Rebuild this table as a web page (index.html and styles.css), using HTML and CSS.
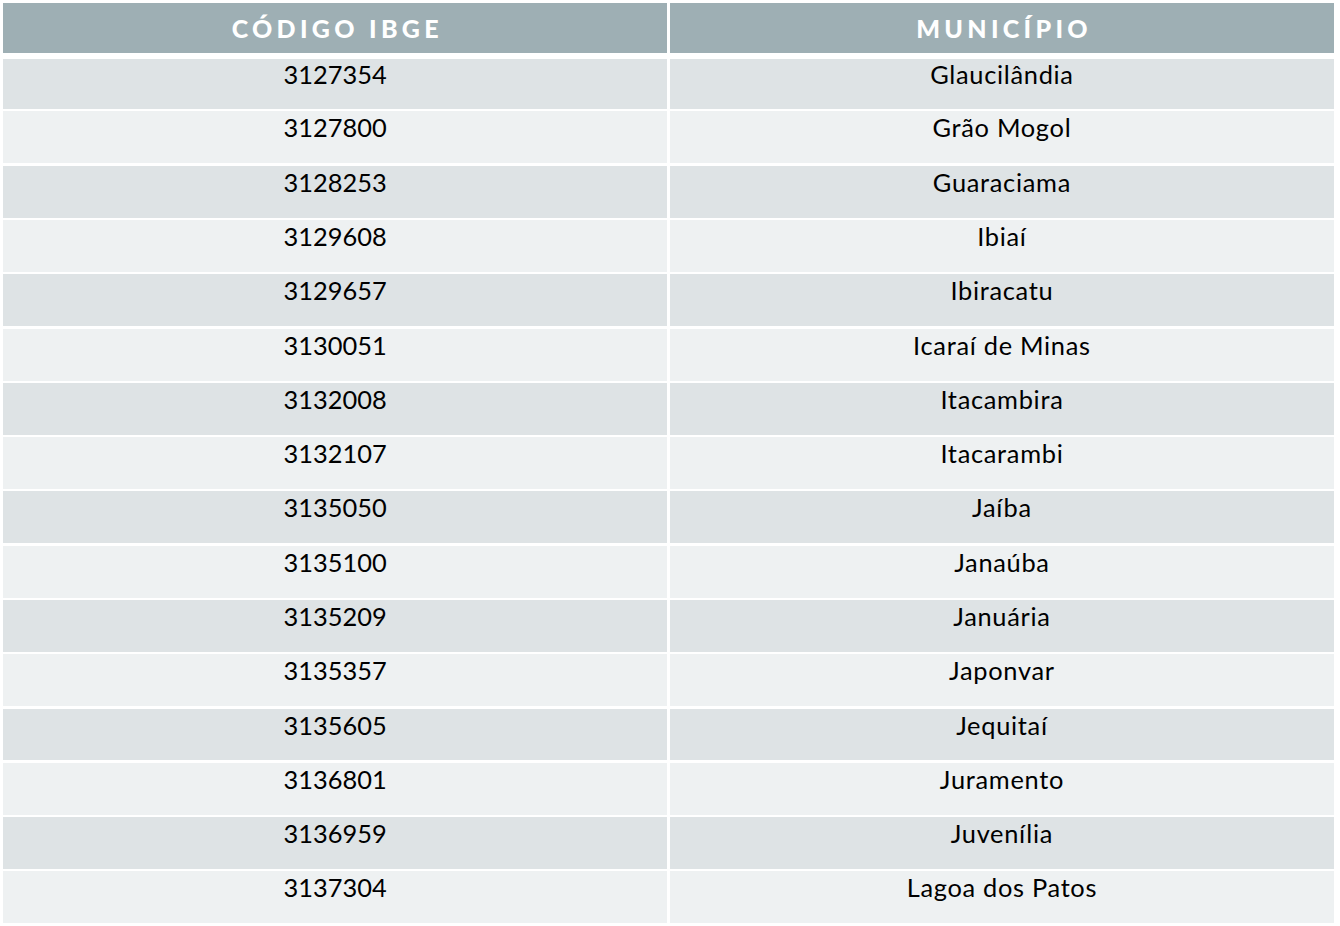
FILE: index.html
```html
<!DOCTYPE html>
<html lang="pt-BR">
<head>
<meta charset="utf-8">
<title>Municípios</title>
<link rel="stylesheet" href="styles.css">
</head>
<body>
<div class="table">
  <div class="head">
    <div class="hcell"><span class="htext">CÓDIGO IBGE</span></div>
    <div class="hcell"><span class="htext">MUNICÍPIO</span></div>
  </div>
  <div class="rows">
    <div class="row odd first"><div class="cell">3127354</div><div class="cell name">Glaucilândia</div></div>
    <div class="row even"><div class="cell">3127800</div><div class="cell name">Grão Mogol</div></div>
    <div class="row odd"><div class="cell">3128253</div><div class="cell name">Guaraciama</div></div>
    <div class="row even"><div class="cell">3129608</div><div class="cell name">Ibiaí</div></div>
    <div class="row odd"><div class="cell">3129657</div><div class="cell name">Ibiracatu</div></div>
    <div class="row even"><div class="cell">3130051</div><div class="cell name">Icaraí de Minas</div></div>
    <div class="row odd"><div class="cell">3132008</div><div class="cell name">Itacambira</div></div>
    <div class="row even"><div class="cell">3132107</div><div class="cell name">Itacarambi</div></div>
    <div class="row odd"><div class="cell">3135050</div><div class="cell name">Jaíba</div></div>
    <div class="row even"><div class="cell">3135100</div><div class="cell name">Janaúba</div></div>
    <div class="row odd"><div class="cell">3135209</div><div class="cell name">Januária</div></div>
    <div class="row even"><div class="cell">3135357</div><div class="cell name">Japonvar</div></div>
    <div class="row odd"><div class="cell">3135605</div><div class="cell name">Jequitaí</div></div>
    <div class="row even"><div class="cell">3136801</div><div class="cell name">Juramento</div></div>
    <div class="row odd"><div class="cell">3136959</div><div class="cell name">Juvenília</div></div>
    <div class="row even"><div class="cell">3137304</div><div class="cell name">Lagoa dos Patos</div></div>
  </div>
</div>
</body>
</html>
```
FILE: styles.css
```css
html, body {
  margin: 0;
  padding: 0;
  background: #ffffff;
}
body {
  font-family: "Lato", "Open Sans", sans-serif;
  color: #000000;
}
.table {
  width: 1331px;
  margin: 3px 0 0 3px;
}
.head {
  display: grid;
  grid-template-columns: 1fr 1fr;
  column-gap: 2.7px;
  height: 50px;
}
.hcell {
  background: #9eafb4;
  color: #ffffff;
  font-weight: 900;
  font-size: 25px;
  display: flex;
  align-items: center;
  justify-content: center;
  padding-bottom: 1px;
  box-sizing: border-box;
}
.htext {
  letter-spacing: 4.3px;
  margin-right: -4.3px;
}
.rows {
  margin-top: 6px;
  display: flex;
  flex-direction: column;
  row-gap: 2.4px;
}
.row {
  display: grid;
  grid-template-columns: 1fr 1fr;
  column-gap: 2.7px;
  height: 51.9px;
}
.row.first {
  height: 50.1px;
}
.odd .cell {
  background: #dee3e5;
}
.even .cell {
  background: #eef1f2;
}
.cell {
  font-size: 25.4px;
  line-height: 1.2;
  text-align: center;
  padding-top: 1px;
}
.cell.name {
  letter-spacing: 0.7px;
}
.row.first .cell {
  padding-top: 0;
}
```
